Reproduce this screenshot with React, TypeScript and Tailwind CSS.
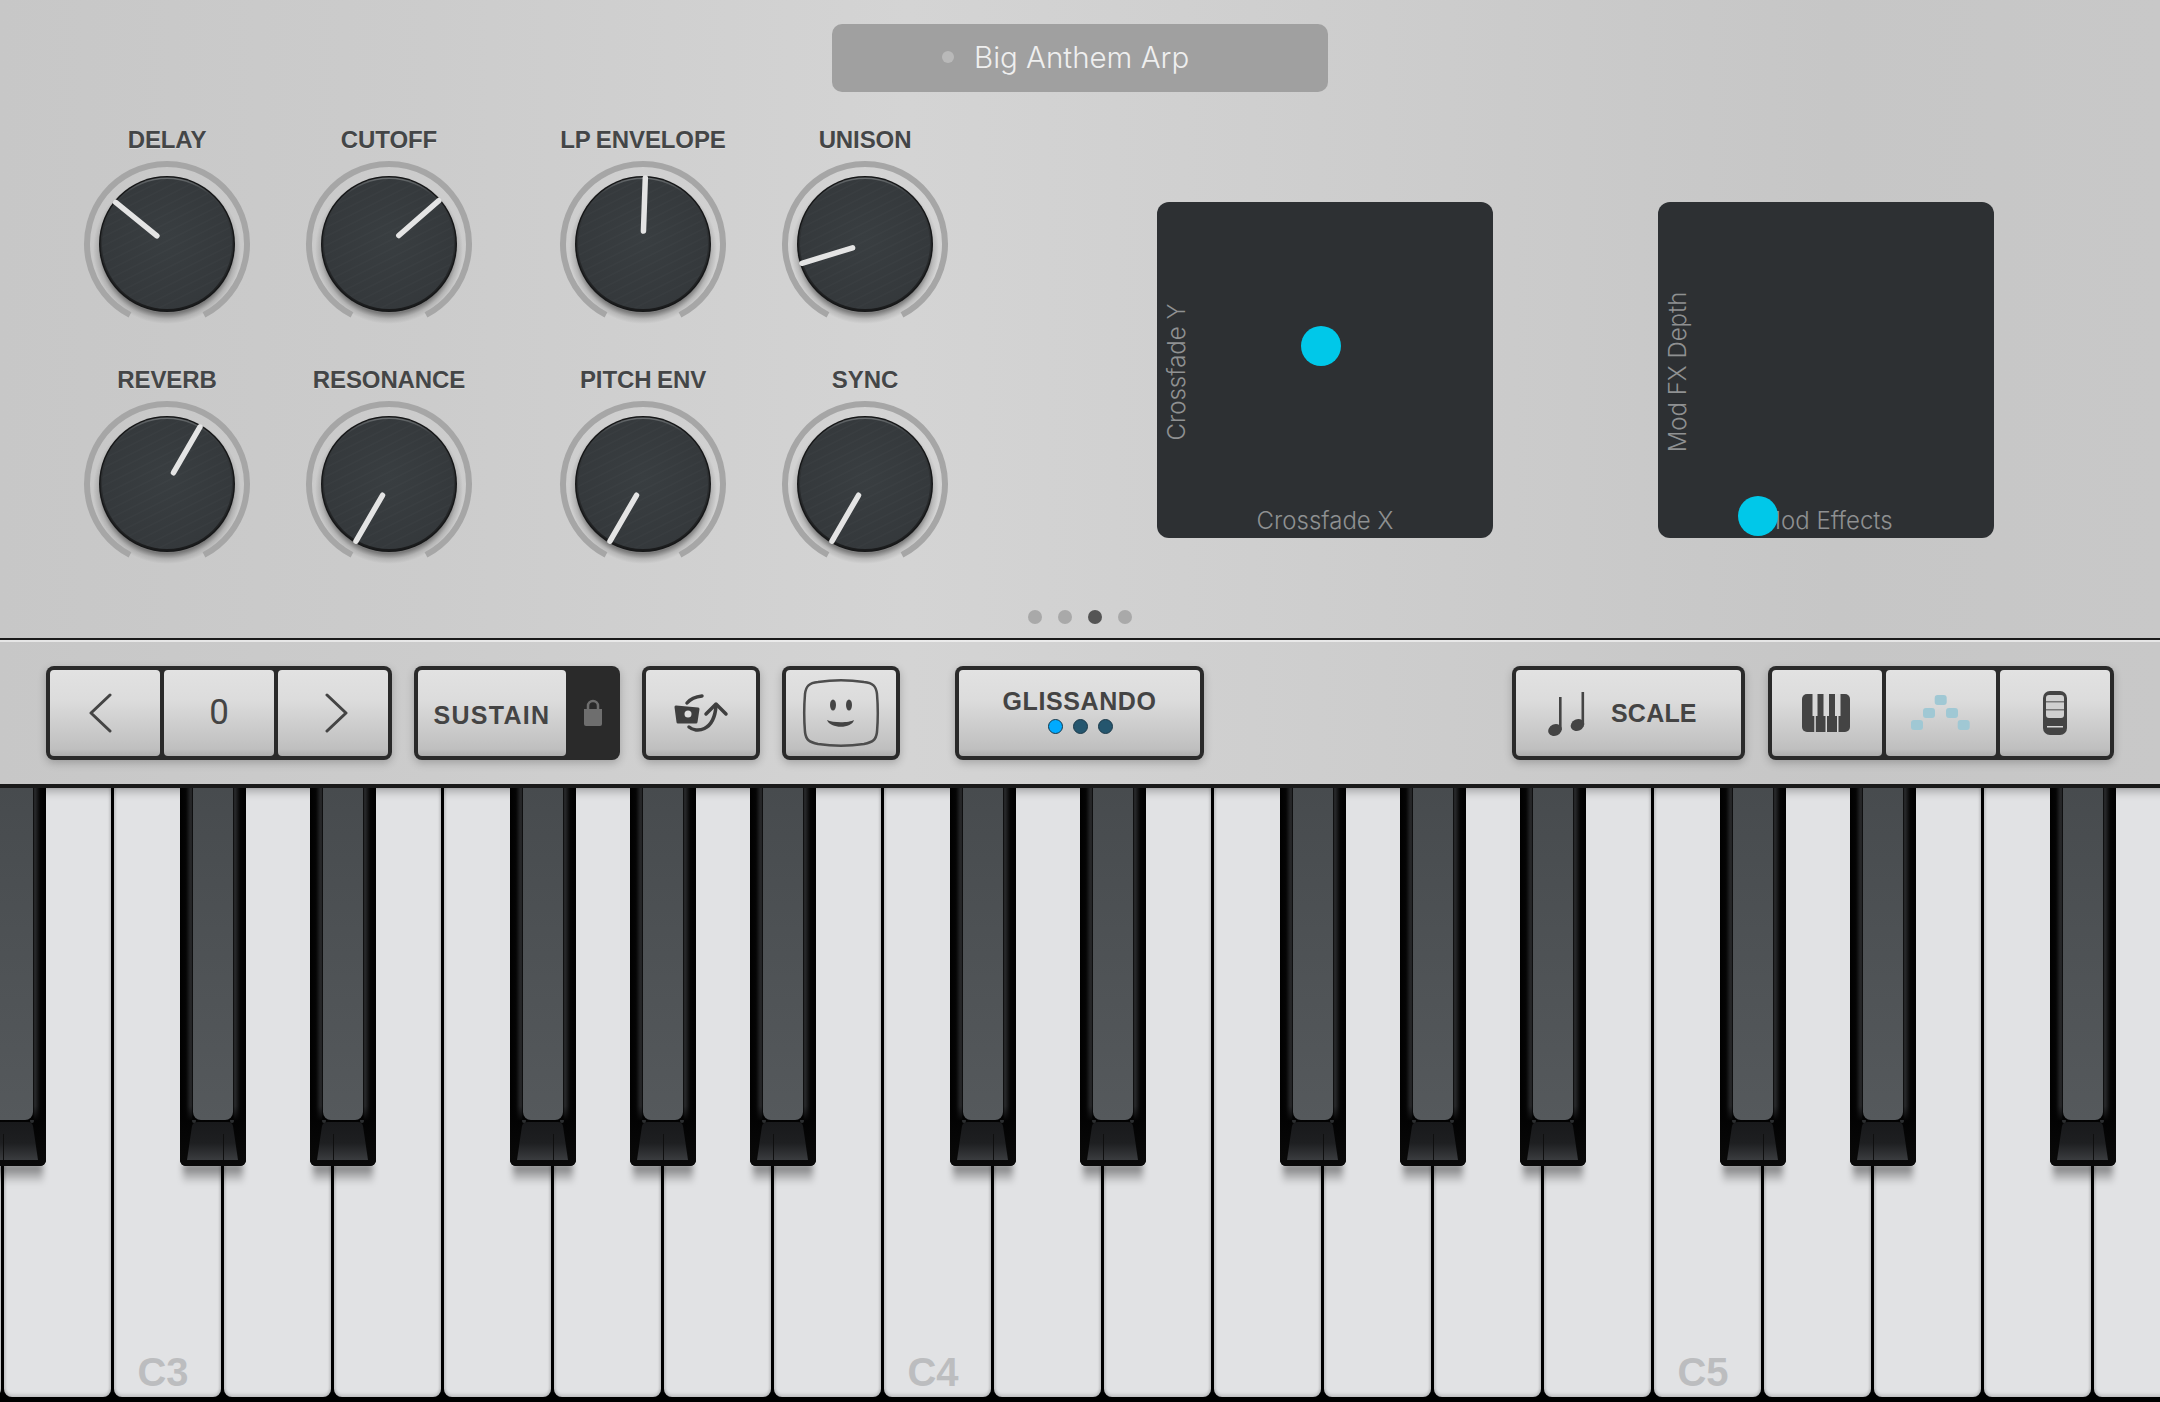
import type { ReactNode } from 'react'

type KnobItem = {
  label: string
  angle: number
}

const knobColumns: { items: KnobItem[]; gap: string }[] = [
  { gap: 'ml-0', items: [{ label: 'DELAY', angle: -51 }, { label: 'REVERB', angle: 30 }] },
  { gap: 'ml-[42px]', items: [{ label: 'CUTOFF', angle: 49 }, { label: 'RESONANCE', angle: 210 }] },
  { gap: 'ml-[74px]', items: [{ label: 'LP ENVELOPE', angle: 2 }, { label: 'PITCH ENV', angle: 210 }] },
  { gap: 'ml-[42px]', items: [{ label: 'UNISON', angle: -107 }, { label: 'SYNC', angle: 210 }] },
]

const whiteKeys = Array.from({ length: 23 }, (_, index) => index)
const noteLabels: Record<number, string> = { 3: 'C3', 10: 'C4', 17: 'C5' }
const blackKeyLefts = [-20, 180, 310, 510, 630, 750, 950, 1080, 1280, 1400, 1520, 1720, 1850, 2050]

const brushLines = Array.from({ length: 26 }, (_, index) => index)

function Knob({ label, angle }: KnobItem) {
  const rad = (angle * Math.PI) / 180
  const x1 = 90 + Math.sin(rad) * 13
  const y1 = 90 - Math.cos(rad) * 13
  const x2 = 90 + Math.sin(rad) * 66
  const y2 = 90 - Math.cos(rad) * 66

  return (
    <div className="flex h-[240px] w-[180px] flex-col items-center">
      <span className="h-[28px] whitespace-nowrap text-[24px] font-bold leading-[28px] tracking-[-0.1px] text-[#444647] [text-shadow:0_1px_0_rgba(255,255,255,0.35)] [word-spacing:-1px]">
        {label}
      </span>
      <svg width="180" height="180" viewBox="0 0 180 180">
        <defs>
          <radialGradient id="knobFace" cx="50%" cy="45%" r="60%">
            <stop offset="0%" stopColor="#393e41" />
            <stop offset="100%" stopColor="#34383b" />
          </radialGradient>
          <linearGradient id="knobEdge" x1="0" y1="0" x2="0" y2="1">
            <stop offset="0%" stopColor="#6a6e70" />
            <stop offset="12%" stopColor="#3a3e41" />
            <stop offset="100%" stopColor="#1a1b1c" />
          </linearGradient>
          <radialGradient id="knobShadow" cx="50%" cy="50%" r="50%">
            <stop offset="86%" stopColor="#000" stopOpacity="0.4" />
            <stop offset="93%" stopColor="#000" stopOpacity="0.12" />
            <stop offset="100%" stopColor="#000" stopOpacity="0" />
          </radialGradient>
          <clipPath id="knobClip">
            <circle cx="90" cy="90" r="65" />
          </clipPath>
        </defs>
        <circle cx="90" cy="96" r="74" fill="url(#knobShadow)" />
        <path d="M 53 160.9 A 80 80 0 1 1 127 160.9" fill="none" stroke="#a6a6a6" strokeWidth="6" />
        <circle cx="90" cy="90" r="68" fill="#161718" />
        <circle cx="90" cy="90" r="66.5" fill="url(#knobEdge)" />
        <circle cx="90" cy="90" r="65" fill="url(#knobFace)" />
        <g clipPath="url(#knobClip)" stroke="#fff" strokeOpacity="0.025" strokeWidth="1.5">
          {brushLines.map((line) => (
            <line key={line} x1={0} y1={line * 9 - 30} x2={180} y2={line * 9 - 120} />
          ))}
        </g>
        <line x1={x1} y1={y1} x2={x2} y2={y2} stroke="#e4e4e4" strokeWidth="5.5" strokeLinecap="round" />
      </svg>
    </div>
  )
}

function XYPad({ xLabel, yLabel, dotClass }: { xLabel: string; yLabel: string; dotClass: string }) {
  return (
    <div className="relative flex h-[336px] w-[336px] items-end justify-center rounded-[12px] bg-[#2d3033] pb-[1px] [font-family:Inter,sans-serif] font-light text-[#8f9192]">
      <span className="text-[24px] leading-[32px]">{xLabel}</span>
      <span className="absolute left-[5px] top-[170px] -translate-y-1/2 rotate-180 whitespace-nowrap text-[24px] leading-[30px] [writing-mode:vertical-rl]">
        {yLabel}
      </span>
      <div className={`absolute h-[40px] w-[40px] rounded-full bg-[#00c8e9] ${dotClass}`} />
    </div>
  )
}

function SegButton({ children, className = '' }: { children: ReactNode; className?: string }) {
  return (
    <div
      className={`flex h-full items-center justify-center rounded-[4px] bg-[linear-gradient(180deg,#e2e2e2_0%,#dcdcdc_35%,#bfbfbf_92%,#adadad_100%)] ${className}`}
    >
      {children}
    </div>
  )
}

function ButtonFrame({ children, className = '' }: { children: ReactNode; className?: string }) {
  return (
    <div
      className={`flex h-[94px] gap-[4px] rounded-[8px] bg-[#2a2a2a] p-[4px] shadow-[0_3px_8px_rgba(0,0,0,0.22)] ${className}`}
    >
      {children}
    </div>
  )
}

function BlackKey({ left }: { left: number }) {
  // the gap between the white keys shows through the nose of the black key
  const slitX = ((((3 - left) % 110) + 110) % 110) + 0.5
  const showSlit = slitX > 10 && slitX < 56

  return (
    <div className="absolute top-0 h-[378px] w-[66px]" style={{ left }}>
      <div className="absolute left-[3px] right-[3px] top-[376px] h-[20px] bg-[linear-gradient(180deg,rgba(0,0,0,0.5)_0%,rgba(0,0,0,0)_100%)] blur-[3px]" />
      <div className="absolute inset-0 rounded-b-[6px] bg-[linear-gradient(90deg,#000_0%,#050505_9%,#2a2b2d_17%,#000_20%,#000_80%,#2a2b2d_83%,#050505_91%,#000_100%)]" />
      <div className="absolute bottom-0 left-0 right-0 h-[60px] rounded-b-[6px] bg-[linear-gradient(180deg,rgba(3,3,3,0)_0%,#030303_25%,#0a0a0a_100%)]" />
      <div className="absolute bottom-[46px] left-[13px] right-[13px] top-0 rounded-b-[8px] bg-[linear-gradient(180deg,#474b4e_0%,#55595c_100%)]" />
      <svg className="absolute left-0 top-[332px]" width="66" height="46" viewBox="0 0 66 46">
        <defs>
          <linearGradient id="blackKeyNose" x1="0" y1="0" x2="0" y2="1">
            <stop offset="0%" stopColor="#18191b" />
            <stop offset="55%" stopColor="#1e1f21" />
            <stop offset="100%" stopColor="#3a3c3f" />
          </linearGradient>
        </defs>
        <path d="M18 2 H48 Q52 2 53 6 L58 40 H7 L12 6 Q13 2 18 2 Z" fill="url(#blackKeyNose)" />
        <circle cx="14" cy="1" r="2" fill="#2b2d2f" />
        <circle cx="52" cy="1" r="2" fill="#2b2d2f" />
        {showSlit ? <line x1={slitX} y1="14" x2={slitX} y2="40" stroke="#0f0f0f" strokeWidth="1" /> : null}
      </svg>
    </div>
  )
}

function Keyboard() {
  return (
    <div className="relative h-[614px] overflow-hidden bg-black">
      <div className="ml-[-218px] flex h-[609px] gap-[3px] px-[1.5px]">
        {whiteKeys.map((key) => (
          <div
            key={key}
            className="flex h-full w-[107px] shrink-0 items-end justify-center rounded-b-[8px] bg-[#e1e2e4] pb-[5px] shadow-[inset_0_-3px_3px_rgba(0,0,0,0.1),inset_2px_0_2px_rgba(0,0,0,0.08),inset_-2px_0_2px_rgba(0,0,0,0.08),inset_0_10px_8px_-6px_rgba(0,0,0,0.25)]"
          >
            <span className="mr-[8px] text-[40px] font-bold leading-[40px] text-[#bcbdbf]">{noteLabels[key]}</span>
          </div>
        ))}
      </div>
      {blackKeyLefts.map((left) => (
        <BlackKey key={left} left={left} />
      ))}
    </div>
  )
}

function App() {
  return (
    <div className="h-[1402px] w-[2160px] overflow-hidden bg-black font-['Liberation_Sans',Arial,sans-serif]">
      <div className="h-[788px] bg-[linear-gradient(90deg,#c7c7c7_0%,#ccc_20%,#d4d4d4_42%,#cfcfcf_58%,#c6c6c6_85%,#c8c8c8_100%)]">
        {/* patch panel */}
        <div className="relative h-[638px]">
          <div className="flex justify-center pt-[24px]">
            <div className="flex h-[68px] w-[496px] items-center gap-[20px] rounded-[10px] bg-[#a0a0a0] pb-[2px] pl-[110px] text-[29.5px] font-light text-[#efefef] [font-family:Inter,sans-serif]">
              <span className="h-[12px] w-[12px] rounded-full bg-[#b9b9b9]" />
              Big Anthem Arp
            </div>
          </div>

          <div className="mt-[34px] flex items-start pl-[77px]">
            {knobColumns.map((column) => (
              <div key={column.items[0].label} className={`flex shrink-0 flex-col ${column.gap}`}>
                {column.items.map((item) => (
                  <Knob key={item.label} {...item} />
                ))}
              </div>
            ))}
            <div className="ml-[202px] mt-[76px] flex gap-[165px]">
              <XYPad xLabel="Crossfade X" yLabel="Crossfade Y" dotClass="left-[144px] top-[124px]" />
              <XYPad xLabel="Mod Effects" yLabel="Mod FX Depth" dotClass="left-[80px] top-[294px]" />
            </div>
          </div>

          <div className="absolute bottom-[14px] left-[1028px] flex gap-[16px]">
            <span className="h-[14px] w-[14px] rounded-full bg-[#a9a9a9]" />
            <span className="h-[14px] w-[14px] rounded-full bg-[#a9a9a9]" />
            <span className="h-[14px] w-[14px] rounded-full bg-[#555]" />
            <span className="h-[14px] w-[14px] rounded-full bg-[#a9a9a9]" />
          </div>
        </div>

        {/* toolbar */}
        <div className="flex h-[150px] items-center border-b-[4px] border-t-[2px] border-b-[#1a1a1a] border-t-[#1b1b1b] px-[46px] pt-[2px] shadow-[inset_0_2px_0_rgba(255,255,255,0.55)]">
          <ButtonFrame className="w-[346px]">
            <SegButton className="flex-1">
              <svg className="mr-[8px]" width="24" height="40" viewBox="0 0 24 40" fill="none" stroke="#444" strokeWidth="3" strokeLinecap="round" strokeLinejoin="round">
                <path d="M21 2 L2 20 L21 38" />
              </svg>
            </SegButton>
            <SegButton className="flex-1">
              <span className="text-[35px] text-[#444] [font-family:Roboto,sans-serif]">0</span>
            </SegButton>
            <SegButton className="flex-1">
              <svg className="ml-[6px]" width="24" height="40" viewBox="0 0 24 40" fill="none" stroke="#444" strokeWidth="3" strokeLinecap="round" strokeLinejoin="round">
                <path d="M3 2 L22 20 L3 38" />
              </svg>
            </SegButton>
          </ButtonFrame>

          <ButtonFrame className="ml-[22px] w-[206px] !gap-0 !pr-0">
            <SegButton className="w-[148px] pt-[5px] text-[25px] font-bold tracking-[1.3px] text-[#444]">SUSTAIN</SegButton>
            <div className="flex flex-1 items-center justify-center">
              <svg width="20" height="28" viewBox="0 0 20 28" fill="#6e6e6e">
                <path d="M1 10 H19 V25 Q19 27 17 27 H3 Q1 27 1 25 Z" />
                <path d="M5 10 V7 A5 5 0 0 1 15 7 V10" fill="none" stroke="#6e6e6e" strokeWidth="2.5" />
              </svg>
            </div>
          </ButtonFrame>

          <ButtonFrame className="ml-[22px] w-[118px]">
            <SegButton className="flex-1">
              <svg width="58" height="42" viewBox="0 0 58 42" fill="none" stroke="#3f3f3f" strokeWidth="3.5" strokeLinecap="round" strokeLinejoin="round">
                <path d="M4 15 L26 17 L24 30 L6 30 Z" fill="#3f3f3f" strokeWidth="3" />
                <circle cx="16" cy="22" r="3.5" fill="#ddd" stroke="none" />
                <path d="M15 11 Q 20 5 30 4" />
                <path d="M17 35 C 24 41, 42 40, 44 14" />
                <path d="M34 22 L44 12 L54 22" />
              </svg>
            </SegButton>
          </ButtonFrame>

          <ButtonFrame className="ml-[22px] w-[118px]">
            <SegButton className="flex-1">
              <svg width="78" height="68" viewBox="0 0 78 68" fill="none">
                <path d="M16 3 C 30 1, 48 1, 62 3 C 71 4, 74 7, 75 15 C 76 27, 76 41, 75 53 C 74 61, 71 63, 62 65 C 48 67, 30 67, 16 65 C 7 63, 4 61, 3 53 C 2 41, 2 27, 3 15 C 4 7, 7 4, 16 3 Z" stroke="#4d4d4d" strokeWidth="2.5" />
                <ellipse cx="31" cy="26" rx="3" ry="5.5" fill="#444" />
                <ellipse cx="47" cy="26" rx="3" ry="5.5" fill="#444" />
                <path d="M25 41 C 31 44, 47 44, 52 41 C 50 50, 28 50, 25 41 Z" fill="#444" />
              </svg>
            </SegButton>
          </ButtonFrame>

          <ButtonFrame className="ml-[55px] w-[249px]">
            <SegButton className="flex-1 flex-col gap-[5px] pb-[4px]">
              <span className="text-[25px] font-bold leading-[26px] tracking-[0.6px] text-[#444]">GLISSANDO</span>
              <div className="ml-[1px] flex gap-[10px]">
                <span className="h-[15px] w-[15px] rounded-full border-[1.5px] border-[#17384a] bg-[#00aaff]" />
                <span className="h-[15px] w-[15px] rounded-full border-[1.5px] border-[#1c3a4a] bg-[#25566e]" />
                <span className="h-[15px] w-[15px] rounded-full border-[1.5px] border-[#1c3a4a] bg-[#25566e]" />
              </div>
            </SegButton>
          </ButtonFrame>

          <div className="flex-1" />

          <ButtonFrame className="w-[233px]">
            <SegButton className="flex-1 justify-start pl-[32px]">
              <svg className="mt-[4px]" width="46" height="46" viewBox="0 0 46 46" fill="#444">
                <ellipse cx="7" cy="38" rx="7" ry="5.7" transform="rotate(-25 7 38)" />
                <rect x="11" y="5" width="2.6" height="33" />
                <ellipse cx="29.5" cy="33" rx="7" ry="5.7" transform="rotate(-25 29.5 33)" />
                <rect x="33.5" y="0" width="2.6" height="33" />
              </svg>
              <span className="ml-[17px] pt-[2px] text-[25px] font-bold tracking-[0.2px] text-[#444]">SCALE</span>
            </SegButton>
          </ButtonFrame>

          <ButtonFrame className="ml-[23px] w-[346px]">
            <SegButton className="flex-1">
              <svg className="mr-[2px]" width="48" height="38" viewBox="0 0 48 38">
                <rect width="48" height="38" rx="5" fill="#444" />
                <rect x="10.5" y="0" width="5" height="22" fill="#d8d8d8" />
                <rect x="21.5" y="0" width="5.5" height="22" fill="#d8d8d8" />
                <rect x="33" y="0" width="5.5" height="22" fill="#d8d8d8" />
                <rect x="12.3" y="22" width="1.5" height="16" fill="#d8d8d8" />
                <rect x="23.5" y="22" width="1.5" height="16" fill="#d8d8d8" />
                <rect x="35" y="22" width="1.5" height="16" fill="#d8d8d8" />
              </svg>
            </SegButton>
            <SegButton className="flex-1">
              <svg width="60" height="38" viewBox="0 0 60 38" fill="#a0c8d4">
                <rect x="23.7" y="1" width="12" height="10" rx="3" />
                <rect x="12" y="14" width="12" height="10" rx="3" />
                <rect x="35" y="14" width="12" height="10" rx="3" />
                <rect x="0" y="26" width="12" height="10" rx="3" />
                <rect x="46.7" y="26" width="12" height="10" rx="3" />
              </svg>
            </SegButton>
            <SegButton className="flex-1">
              <svg width="24" height="44" viewBox="0 0 24 44">
                <rect width="24" height="44" rx="7" fill="#444" />
                <rect x="3" y="4" width="18" height="23" rx="3" fill="#d0d0d0" />
                <rect x="3" y="10" width="18" height="1.5" fill="#777" />
                <rect x="3" y="18" width="18" height="1.5" fill="#777" />
                <rect x="4" y="35" width="16" height="1.5" fill="#d8d8d8" />
              </svg>
            </SegButton>
          </ButtonFrame>
        </div>
      </div>

      <Keyboard />
    </div>
  )
}

export default App
